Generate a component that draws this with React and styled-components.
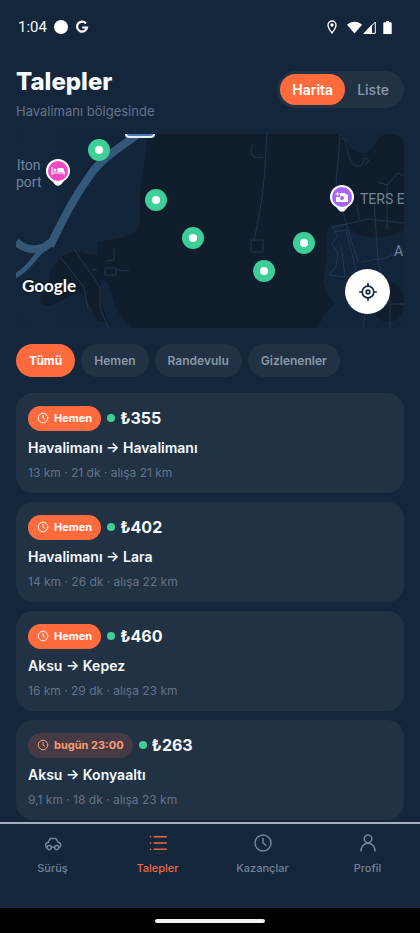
import React, { useState } from 'react';
import styled, { createGlobalStyle, ThemeProvider } from 'styled-components';

const theme = {
  colors: {
    background: '#13263b',
    surface: '#203244',
    accent: '#ff6b3d',
    accentSoft: '#ff9a78',
    accentDim: '#463a45',
    text: '#f8fafc',
    muted: '#8b99a8',
    faint: '#64748b',
    green: '#3ecf98',
    map: '#111e2d',
  },
};

const GlobalStyle = createGlobalStyle`
  * {
    box-sizing: border-box;
  }

  body {
    margin: 0;
    background-color: ${(props) => props.theme.colors.background};
    font-family: Inter, "Noto Sans", sans-serif;
  }

  button {
    border: 0;
    padding: 0;
    font-family: inherit;
    cursor: pointer;
  }

  svg {
    display: block;
    flex-shrink: 0;
  }
`;

const Screen = styled.div`
  display: flex;
  flex-direction: column;
  height: 100vh;
  overflow: hidden;
  color: ${(props) => props.theme.colors.text};
`;

const StatusBar = styled.div`
  display: flex;
  flex-shrink: 0;
  align-items: center;
  justify-content: space-between;
  height: 54px;
  padding: 0 28px 0 18px;
  font-family: Roboto, sans-serif;
  font-size: 15px;
`;

const StatusGroup = styled.div`
  display: flex;
  align-items: center;
  gap: ${(props) => props.$gap}px;
`;

const Header = styled.header`
  display: flex;
  flex-shrink: 0;
  align-items: flex-start;
  justify-content: space-between;
  padding: 12px 16px 14px;
`;

const Title = styled.h1`
  margin: 0;
  font-size: 24px;
  font-weight: 800;
  line-height: 32px;
`;

const Subtitle = styled.p`
  margin: 4px 0 0;
  color: ${(props) => props.theme.colors.faint};
  font-size: 13px;
  font-weight: 400;
  line-height: 18px;
`;

const Segments = styled.div`
  display: flex;
  margin-top: 5px;
  padding: 3px;
  border-radius: 20px;
  background-color: ${(props) => props.theme.colors.surface};
`;

const Segment = styled.button`
  height: 31px;
  padding: 0 12px;
  border-radius: 16px;
  background-color: ${(props) =>
    props.$active ? props.theme.colors.accent : 'transparent'};
  color: ${(props) => (props.$active ? '#fff' : props.theme.colors.muted)};
  font-size: 14px;
  font-weight: ${(props) => (props.$active ? 600 : 500)};
`;

const MapCard = styled.section`
  position: relative;
  flex-shrink: 0;
  height: 194px;
  margin: 0 16px;
  border-radius: 12px;
  overflow: hidden;
`;

const MapArt = styled.svg`
  width: 100%;
  height: 100%;
`;

const LocateButton = styled.button`
  position: absolute;
  right: 14px;
  bottom: 14px;
  display: flex;
  align-items: center;
  justify-content: center;
  width: 45px;
  height: 45px;
  border-radius: 50%;
  background-color: #fff;
  color: ${(props) => props.theme.colors.background};
`;

const Filters = styled.div`
  display: flex;
  flex-shrink: 0;
  gap: 6px;
  padding: 16px;
`;

const Chip = styled.button`
  height: 33px;
  padding: 0 13px;
  border-radius: 17px;
  background-color: ${(props) =>
    props.$active ? props.theme.colors.accent : props.theme.colors.surface};
  color: ${(props) => (props.$active ? '#fff' : props.theme.colors.muted)};
  font-size: 12px;
  font-weight: ${(props) => (props.$active ? 700 : 600)};
`;

const List = styled.main`
  display: flex;
  flex: 1;
  flex-direction: column;
  gap: 9px;
  min-height: 0;
  padding: 0 16px;
  overflow: hidden;
`;

const Card = styled.article`
  flex-shrink: 0;
  padding: 12px 12px 11px;
  border-radius: 17px;
  background-color: ${(props) => props.theme.colors.surface};
`;

const CardTop = styled.div`
  display: flex;
  align-items: center;
`;

const Badge = styled.span`
  display: flex;
  align-items: center;
  gap: 5px;
  height: 25px;
  padding: 0 9px;
  border-radius: 13px;
  background-color: ${(props) =>
    props.$scheduled
      ? props.theme.colors.accentDim
      : props.theme.colors.accent};
  color: ${(props) =>
    props.$scheduled ? props.theme.colors.accentSoft : '#fff'};
  font-size: 11px;
  font-weight: 700;
`;

const Dot = styled.span`
  width: 8px;
  height: 8px;
  margin: 0 5px 0 6px;
  border-radius: 50%;
  background-color: ${(props) => props.theme.colors.green};
`;

const Price = styled.strong`
  font-size: 16px;
  font-weight: 700;
  line-height: 26px;
`;

const Route = styled.h2`
  margin: 6px 0 0;
  font-size: 14px;
  font-weight: 600;
  line-height: 22px;
`;

const Details = styled.p`
  margin: 5px 0 0;
  color: ${(props) => props.theme.colors.faint};
  font-size: 12px;
  line-height: 18px;
`;

const TabBar = styled.nav`
  display: grid;
  flex-shrink: 0;
  grid-template-columns: repeat(4, 1fr);
  height: 86px;
  border-top: 2px solid #a3b0ba;
`;

const Tab = styled.a`
  display: flex;
  flex-direction: column;
  align-items: center;
  gap: 7px;
  padding-top: 9px;
  color: ${(props) => (props.$active ? '#f0683f' : '#748395')};
  font-size: 11px;
  font-weight: 500;
  line-height: 16px;
  text-decoration: none;
`;

const GestureBar = styled.div`
  display: flex;
  flex-shrink: 0;
  align-items: center;
  justify-content: center;
  height: 25px;
  background-color: #000;
`;

const Handle = styled.span`
  width: 110px;
  height: 4px;
  border-radius: 2px;
  background-color: #f2f2f2;
`;

const Stroke = ({ size = 20, width = 1.5, children }) => (
  <svg
    width={size}
    height={size}
    viewBox="0 0 24 24"
    fill="none"
    stroke="currentColor"
    strokeWidth={width}
    strokeLinecap="round"
    strokeLinejoin="round"
    aria-hidden="true"
  >
    {children}
  </svg>
);

const ClockIcon = ({ size, width }) => (
  <Stroke size={size} width={width}>
    <circle cx="12" cy="12" r="9.6" />
    <path d="M12 6.5V12l3.5 2.5" />
  </Stroke>
);

const CarIcon = () => (
  <Stroke width={1.8}>
    <path d="M4.5 17.500C3 17 3 16 3 14.500c0-2 1.500-3 3.500-3.500L8.500 6.500h7L18 11c2 .5 3.300 1.500 3.300 3.500 0 1.500-.3 2.500-1.800 3" />
    <path d="M10.200 17h3.600" />
    <circle cx="7.5" cy="17.500" r="2.500" />
    <circle cx="16.500" cy="17.500" r="2.500" />
  </Stroke>
);

const ListIcon = () => (
  <Stroke width={2}>
    <path d="M7.5 4.5H22M7.5 12H22M7.5 19.5H22" />
    <path d="M3 4.5h.1M3 12h.1M3 19.5h.1" />
  </Stroke>
);

const PersonIcon = () => (
  <Stroke width={1.8}>
    <circle cx="12" cy="7" r="4.6" />
    <path d="M3.5 21.5c0-5.3 3.7-9.3 8.5-9.3s8.500 4 8.500 9.300" />
  </Stroke>
);

const LocateIcon = () => (
  <Stroke width={2}>
    <circle cx="12" cy="12" r="7" />
    <circle cx="12" cy="12" r="2.2" />
    <path d="M12 2v3M12 19v3M2 12h3M19 12h3" />
  </Stroke>
);

const GoogleIcon = () => (
  <svg width="14" height="14" viewBox="0 0 14 14" fill="none" aria-hidden="true">
    <path
      d="M11 3.5A5 5 0 1 0 12 7.500H7.200"
      stroke="#fff"
      strokeWidth="2.200"
    />
  </svg>
);

const PinIcon = () => (
  <svg width="10" height="14" viewBox="0 0 10 14" fill="none" aria-hidden="true">
    <path
      d="M5 13C2.3 9.6 1 7.3 1 5a4 4 0 0 1 8 0c0 2.3-1.3 4.6-4 8Z"
      stroke="#fff"
      strokeWidth="1.3"
    />
    <circle cx="5" cy="5" r="1.7" fill="#fff" />
  </svg>
);

const WifiIcon = () => (
  <svg width="15" height="13" viewBox="0 0 16 13" aria-hidden="true">
    <path d="M0 3.6C4.5-.6 11.5-.6 16 3.6L8 13Z" fill="#fff" />
  </svg>
);

const SignalIcon = () => (
  <svg width="13" height="13" viewBox="0 0 13 13" aria-hidden="true">
    <path d="M12.3 1v11.4H1.5Z" fill="none" stroke="#fff" />
    <path d="M9 3.5V13H0Z" fill="#fff" />
  </svg>
);

const BatteryIcon = () => (
  <svg width="9" height="13" viewBox="0 0 9 13" aria-hidden="true">
    <path d="M3 0h3v1.3h2l.7.8V13H.3V2.100l.7-.8h2Z" fill="#fff" />
  </svg>
);

const PlaceMarker = ({ x, y, color, children }) => (
  <g transform={`translate(${x} ${y})`}>
    <path
      d="M-12 0a12 12 0 0 1 24 0c0 5-3 8-6 10l-3 3.500q-3 2.500-6 0L-6 10C-9 8-12 5-12 0Z"
      fill="#fff"
    />
    <circle r="10" fill={color} />
    {children}
  </g>
);

const drivers = [
  [83, 16],
  [140, 66],
  [177, 104],
  [248, 137],
  [288, 109],
];

const AreaMap = () => (
  <MapArt
    viewBox="0 0 388 194"
    preserveAspectRatio="xMidYMid slice"
    role="img"
    aria-label="Havalimanı bölgesi haritası"
  >
    <rect width="388" height="194" fill="#13263b" />
    <path
      d="M131 0h192l12 14c5 4 10 7 15 5 9-5 10-17 22-19h16v96c-14 8-30 9-46 5l-12-11h-16c-4 8-3 20-3 30l-4 28c2 8 4 14 12 22l-11 10-6 14H116c-8-9-15-14-17-24-2-8-3-20-14-26v22l6 22H82c-7-12-10-26-20-30-14 4-30 22-38 10 0-8 8-10 9-20-1-13 8-24 20-29 11-4 19 3 29 2l-1-12c14-5 29-4 39-11 6-8 4-18 4-30 0-20 6-38 7-68Z"
      fill="#111e2d"
    />
    <ellipse cx="372" cy="168" rx="16" ry="20" fill="#111e2d" />
    <g fill="none" stroke="#2e4867" opacity="0.55">
      <path d="M251 0c-2 34-3 64-13 106M237 9c-5 14 2 16 10 14M235 106h12v12h-12Z" />
      <path d="M324 0c-1 25-4 40-4 56l22 72M326 5c6-3 4 25 14 27 8 2 6-6 9-8l4 2-4 5" />
      <path d="m388 42-6-3-11 12-9-3M371 51v45M343 86l-2-16M318 93l34-8 36 4M358 66l4 62 12 40v26" />
      <path d="m316 92 6 10-6 8 6 9-2 13-7 9 18 2M318 98l12-2 10 40M325 112l4 30M345 128l24-4 19-7M374 170h14M350 172l-3 22" />
      <path d="m44 123 24 30 4 22M58 115l26 38v20l8 21M98 114v12l-8 1M89 134h11v7H89ZM76 136h5M100 136l13 1" />
    </g>
    <g fill="none" stroke="#355879">
      <path d="M122 0C102 15 85 25 75 40 56 66 47 86 34 112" strokeWidth="8" />
      <path d="M0 108c12 10 26 9 35 0" strokeWidth="8" />
      <path d="M31 114c-11 2-14 19-32 28" strokeWidth="5" />
    </g>
    <rect
      x="110"
      y="-8"
      width="28"
      height="11"
      rx="3"
      fill="#4a79b8"
      stroke="#e3edf6"
      strokeWidth="2"
    />
    <g fill="#71859b" fontFamily="Roboto, sans-serif" fontSize="14">
      <text x="1" y="36">
        lton
      </text>
      <text x="0" y="53">
        port
      </text>
      <text x="344" y="70">
        TERS E
      </text>
      <text x="378" y="122">
        A
      </text>
    </g>
    <PlaceMarker x={42} y={37} color="#f548c4">
      <path
        d="M-6-4v8M-6 2H6M6 4V0"
        fill="none"
        stroke="#fff"
        strokeWidth="1.2"
      />
      <path d="M-.5-3H4a2 2 0 0 1 2 2v2H-.5Z" fill="#fff" />
      <circle cx="-3" cy="-1" r="1.5" fill="#fff" />
    </PlaceMarker>
    <PlaceMarker x={326} y={63} color="#a666f2">
      <path d="M-2-4H3l1 1.5h2V5H-6V0h4Z" fill="#fff" />
      <path d="M-4.500-5v4M-6.500-3h4" stroke="#fff" />
      <circle cx="0" cy="1" r="2" fill="#a666f2" />
    </PlaceMarker>
    {drivers.map(([x, y]) => (
      <g key={`${x}-${y}`}>
        <circle cx={x} cy={y} r="11" fill="#3ecf98" />
        <circle cx={x} cy={y} r="4" fill="#fff" />
      </g>
    ))}
    <text
      x="6"
      y="158"
      fill="#fff"
      stroke="#101b28"
      strokeWidth="3"
      paintOrder="stroke"
      fontFamily="Lato, sans-serif"
      fontSize="17"
      fontWeight="700"
    >
      Google
    </text>
  </MapArt>
);

const filters = ['Tümü', 'Hemen', 'Randevulu', 'Gizlenenler'];

const requests = [
  {
    when: 'Hemen',
    price: '₺355',
    route: 'Havalimanı → Havalimanı',
    details: '13 km · 21 dk · alışa 21 km',
  },
  {
    when: 'Hemen',
    price: '₺402',
    route: 'Havalimanı → Lara',
    details: '14 km · 26 dk · alışa 22 km',
  },
  {
    when: 'Hemen',
    price: '₺460',
    route: 'Aksu → Kepez',
    details: '16 km · 29 dk · alışa 23 km',
  },
  {
    when: 'bugün 23:00',
    scheduled: true,
    price: '₺263',
    route: 'Aksu → Konyaaltı',
    details: '9,1 km · 18 dk · alışa 23 km',
  },
];

const tabs = [
  { label: 'Sürüş', icon: <CarIcon /> },
  { label: 'Talepler', icon: <ListIcon />, active: true },
  { label: 'Kazançlar', icon: <ClockIcon size={20} width={1.8} /> },
  { label: 'Profil', icon: <PersonIcon /> },
];

const RequestCard = ({ request }) => (
  <Card>
    <CardTop>
      <Badge $scheduled={request.scheduled}>
        <ClockIcon size={12} width={2} />
        {request.when}
      </Badge>
      <Dot />
      <Price>{request.price}</Price>
    </CardTop>
    <Route>{request.route}</Route>
    <Details>{request.details}</Details>
  </Card>
);

const App = () => {
  const [view, setView] = useState('Harita');
  const [filter, setFilter] = useState('Tümü');

  return (
    <ThemeProvider theme={theme}>
      <GlobalStyle />
      <Screen>
        <StatusBar>
          <StatusGroup $gap={7}>
            <span>1:04</span>
            <svg width="14" height="14" aria-hidden="true">
              <circle cx="7" cy="7" r="7" fill="#fff" />
            </svg>
            <GoogleIcon />
          </StatusGroup>
          <StatusGroup $gap={10}>
            <PinIcon />
            <StatusGroup $gap={7}>
              <StatusGroup $gap={1}>
                <WifiIcon />
                <SignalIcon />
              </StatusGroup>
              <BatteryIcon />
            </StatusGroup>
          </StatusGroup>
        </StatusBar>
        <Header>
          <div>
            <Title>Talepler</Title>
            <Subtitle>Havalimanı bölgesinde</Subtitle>
          </div>
          <Segments>
            {['Harita', 'Liste'].map((name) => (
              <Segment
                key={name}
                type="button"
                $active={view === name}
                onClick={() => setView(name)}
              >
                {name}
              </Segment>
            ))}
          </Segments>
        </Header>
        <MapCard>
          <AreaMap />
          <LocateButton type="button" aria-label="Konumum">
            <LocateIcon />
          </LocateButton>
        </MapCard>
        <Filters>
          {filters.map((name) => (
            <Chip
              key={name}
              type="button"
              $active={filter === name}
              onClick={() => setFilter(name)}
            >
              {name}
            </Chip>
          ))}
        </Filters>
        <List>
          {requests.map((request) => (
            <RequestCard key={request.price} request={request} />
          ))}
        </List>
        <TabBar>
          {tabs.map((tab) => (
            <Tab key={tab.label} href="#" $active={tab.active}>
              {tab.icon}
              {tab.label}
            </Tab>
          ))}
        </TabBar>
        <GestureBar>
          <Handle />
        </GestureBar>
      </Screen>
    </ThemeProvider>
  );
};

export default App;
